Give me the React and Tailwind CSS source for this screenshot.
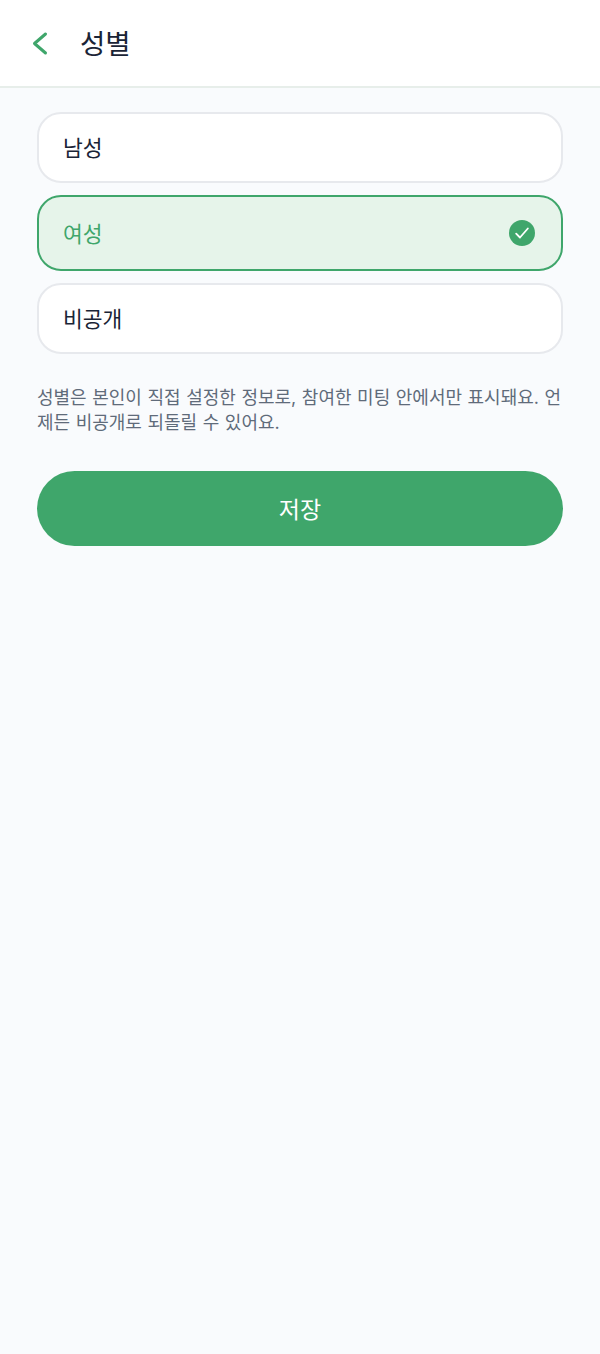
const options = [
  { label: "남성", selected: false },
  { label: "여성", selected: true },
  { label: "비공개", selected: false },
];

const App = () => {
  return (
    <div className="min-h-[1354px] bg-[#f9fbfd] font-['Inter','Noto_Sans_CJK_KR',sans-serif]">
      <header className="h-[88px] bg-white border-b-2 border-[#e7eeea] flex items-center pl-[26px]">
        <svg width="28" height="28" viewBox="0 0 28 28" fill="none" stroke="#3fa66b" strokeWidth="3" strokeLinecap="round" strokeLinejoin="round">
          <path d="M19.5 5 L8.5 14.5 L19.5 24" />
        </svg>
        <h1 className="ml-[26px] pt-[3px] text-[27.5px] leading-none text-[#1a2436]">성별</h1>
      </header>

      <main className="px-[37px] pt-[24px]">
        <div className="flex flex-col gap-[12px]">
          {options.map((o) =>
            o.selected ? (
              <button key={o.label} className="h-[76px] rounded-[24px] border-2 border-[#3fa66b] bg-[#e6f4ea] flex items-center justify-between pl-[24px] pr-[26px]">
                <span className="pt-[2px] text-[21.5px] text-[#3fa66b]">{o.label}</span>
                <span className="w-[26px] h-[26px] rounded-full bg-[#3fa66b] flex items-center justify-center">
                  <svg width="18" height="18" viewBox="0 0 16 16" fill="none" stroke="white" strokeWidth="1.6" strokeLinecap="round" strokeLinejoin="round">
                    <path d="M2.8 8.6 L6.2 12 L13.2 4" />
                  </svg>
                </span>
              </button>
            ) : (
              <button key={o.label} className="h-[71px] rounded-[24px] border-2 border-[#e7e9ed] bg-white flex items-center pl-[24px]">
                <span className="pt-[1px] text-[21.5px] text-[#1a2436]">{o.label}</span>
              </button>
            )
          )}
        </div>

        <p className="mt-[31px] text-[18px] leading-[25px] [word-spacing:0.5px] text-[#5f6b7a] break-all">
          성별은 본인이 직접 설정한 정보로, 참여한 미팅 안에서만 표시돼요. 언제든 비공개로 되돌릴 수 있어요.
        </p>

        <button className="mt-[36px] pt-[3px] w-full h-[75px] rounded-full bg-[#3fa66b] text-white text-[23px]">
          저장
        </button>
      </main>
    </div>
  );
};

export default App;
